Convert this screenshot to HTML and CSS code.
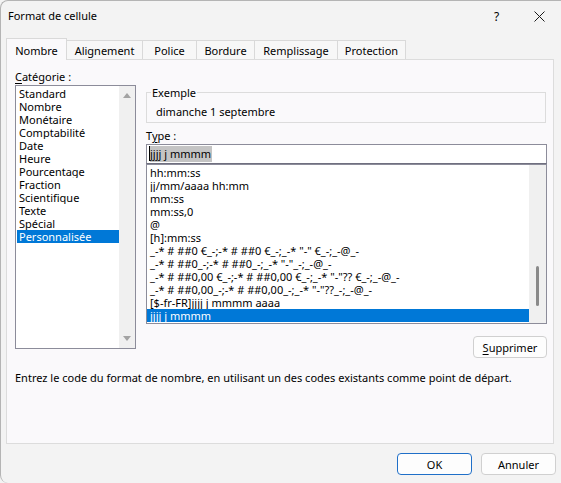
FILE: index.html
```html
<!DOCTYPE html>
<html lang="fr">
<head>
<meta charset="utf-8">
<title>Format de cellule</title>
<link rel="stylesheet" href="styles.css">
</head>
<body>
<div class="dialog">
  <div class="titlebar">
    <span class="title">Format de cellule</span>
    <div class="tb-buttons">
      <span class="tb-btn help">?</span>
      <span class="tb-btn close">
        <svg width="11" height="11" viewBox="0 0 11 11"><path d="M0.5 0.5 L10.5 10.5 M10.5 0.5 L0.5 10.5" stroke="#1a1a1a" stroke-width="1" fill="none"/></svg>
      </span>
    </div>
  </div>

  <div class="tabs">
    <div class="tab active t-nombre">Nombre</div>
    <div class="tab t-align">Alignement</div>
    <div class="tab t-police">Police</div>
    <div class="tab t-bordure">Bordure</div>
    <div class="tab t-rempl">Remplissage</div>
    <div class="tab t-prot">Protection</div>
  </div>

  <div class="panel">
    <div class="cols">
      <div class="left">
        <div class="label"><u>C</u>atégorie :</div>
        <div class="listbox cat">
          <div class="items">
            <div class="item">Standard</div>
            <div class="item">Nombre</div>
            <div class="item">Monétaire</div>
            <div class="item">Comptabilité</div>
            <div class="item">Date</div>
            <div class="item">Heure</div>
            <div class="item">Pourcentage</div>
            <div class="item">Fraction</div>
            <div class="item">Scientifique</div>
            <div class="item">Texte</div>
            <div class="item">Spécial</div>
            <div class="item selected">Personnalisée</div>
          </div>
          <div class="vscroll cat-scroll">
            <span class="arrow up"></span>
            <span class="arrow down"></span>
          </div>
        </div>
      </div>

      <div class="right">
        <div class="group">
          <div class="group-label">Exemple</div>
          <div class="group-text">dimanche 1 septembre</div>
        </div>
        <div class="label type-label">T<u>y</u>pe :</div>
        <div class="input"><span class="caret"></span><span class="sel">jjjj j mmmm</span></div>
        <div class="listbox types">
          <div class="items">
            <div class="item">hh:mm:ss</div>
            <div class="item">jj/mm/aaaa hh:mm</div>
            <div class="item">mm:ss</div>
            <div class="item">mm:ss,0</div>
            <div class="item">@</div>
            <div class="item">[h]:mm:ss</div>
            <div class="item">_-* # ##0 €_-;-* # ##0 €_-;_-* "-" €_-;_-@_-</div>
            <div class="item">_-* # ##0_-;-* # ##0_-;_-* "-"_-;_-@_-</div>
            <div class="item">_-* # ##0,00 €_-;-* # ##0,00 €_-;_-* "-"?? €_-;_-@_-</div>
            <div class="item">_-* # ##0,00_-;-* # ##0,00_-;_-* "-"??_-;_-@_-</div>
            <div class="item">[$-fr-FR]jjjj j mmmm aaaa</div>
            <div class="item selected">jjjj j mmmm</div>
          </div>
          <div class="vscroll type-scroll">
            <span class="thumb"></span>
          </div>
        </div>
        <div class="btn-row">
          <button class="btn"><u>S</u>upprimer</button>
        </div>
      </div>
    </div>
    <p class="desc">Entrez le code du format de nombre, en utilisant un des codes existants comme point de départ.</p>
  </div>

  <div class="footer">
    <button class="btn default">OK</button>
    <button class="btn">Annuler</button>
  </div>
</div>
</body>
</html>
```

FILE: styles.css
```css
* { box-sizing: border-box; }

html, body {
  margin: 0;
  padding: 0;
  background: #f3f3f3;
}

body {
  font-family: "Noto Sans", "Open Sans", sans-serif;
  font-size: 11px;
  line-height: 15px;
  color: #000;
}

.dialog {
  width: 561px;
  height: 483px;
  background: #f3f3f3;
  border-top: 1px solid #b4b4b4;
  border-left: 1px solid #b4b4b4;
  border-radius: 8px 0 0 8px;
  overflow: hidden;
  display: flex;
  flex-direction: column;
}

/* title bar */
.titlebar {
  height: 37px;
  display: flex;
  justify-content: space-between;
  align-items: flex-start;
  padding-left: 7px;
}
.title {
  padding-top: 7px;
  font-size: 11px;
}
.tb-buttons {
  display: flex;
}
.tb-btn {
  width: 46px;
  height: 30px;
  display: flex;
  align-items: center;
  justify-content: center;
}
.help {
  font-size: 12px;
  padding-top: 1px;
  width: 45px;
  margin-right: -2px;
}
.close {
  width: 44px;
  padding-top: 1px;
}

/* tabs */
.tabs {
  display: flex;
  align-items: flex-end;
  height: 21px;
  padding-left: 5px;
  position: relative;
  z-index: 2;
}
.tab {
  border: 1px solid #d9d9d9;
  border-bottom: none;
  background: #f7f7f7;
  padding: 2px 0 1px 0;
  height: 19px;
  margin-left: -1px;
  white-space: nowrap;
  text-align: center;
}
.tab.active {
  background: #faf9fb;
  height: 22px;
  padding: 4px 0 2px 0;
  margin-bottom: -1px;
  margin-left: 0;
  position: relative;
  z-index: 3;
}
.t-nombre { width: 61px; }
.t-align { width: 77px; }
.t-police { width: 55px; }
.t-bordure { width: 59px; }
.t-rempl { width: 84px; }
.t-prot { width: 69px; }

/* panel */
.panel {
  margin: 0 7px 0 5px;
  height: 385px;
  background: #faf9fb;
  border: 1px solid #dcdcdc;
  padding: 9px 0 0 8px;
  position: relative;
  z-index: 1;
}

.cols {
  display: flex;
  gap: 10px;
}

.left {
  width: 121px;
}
.label {
  height: 15px;
}
.label u, .btn u {
  text-underline-offset: 2px;
}

.listbox {
  margin-top: 1px;
  border: 1px solid #8c8c9a;
  background: #ffffff;
  display: flex;
}
.listbox .items {
  flex: 1;
  min-width: 0;
  padding-top: 1px;
}
.item {
  height: 13px;
  line-height: 13px;
  white-space: nowrap;
  overflow: hidden;
}
.item.selected {
  background: #0078d7;
  color: #ffffff;
}

.cat {
  height: 264px;
}
.cat .items {
  padding-left: 1px;
}
.cat .item {
  padding-left: 2px;
}
.vscroll {
  background: #f0f0f0;
  display: flex;
  flex-direction: column;
}
.cat-scroll {
  width: 16px;
  justify-content: space-between;
  align-items: center;
  padding: 7px 0 7px 0;
}
.arrow {
  width: 0;
  height: 0;
  border-left: 4px solid transparent;
  border-right: 4px solid transparent;
}
.arrow.up {
  border-bottom: 5px solid #a3a3a3;
}
.arrow.down {
  border-top: 5px solid #a3a3a3;
}

/* right column */
.right {
  width: 401px;
  padding-top: 23px;
}
.group {
  border: 1px solid #dcdcdc;
  padding: 0 0 3px 9px;
  width: 400px;
}
.group-label {
  width: fit-content;
  margin: -8px 0 0 -5px;
  padding: 0 1px;
  background: #faf9fb;
}
.group-text {
  margin-top: 4px;
}
.type-label {
  margin-top: 5px;
}
.input {
  margin-top: 1px;
  height: 20px;
  border: 1px solid #8c8c9a;
  border-bottom-color: #6f6f7f;
  background: #ffffff;
  padding: 1px 0 0 2px;
  display: flex;
  align-items: flex-start;
}
.caret {
  width: 1px;
  height: 15px;
  background: #000;
}
.sel {
  background: #c4c4c4;
  height: 16px;
  line-height: 15px;
  padding-right: 1px;
}

.types {
  margin-top: 0;
  height: 160px;
}
.types .item {
  padding-left: 3px;
}
.type-scroll {
  width: 17px;
  padding: 101px 0 0 7px;
}
.thumb {
  width: 3px;
  height: 40px;
  background: #8a8a8a;
  border-radius: 2px;
}

.btn-row {
  display: flex;
  justify-content: flex-end;
  margin-top: 12px;
}

.btn {
  font-family: "Noto Sans", "Open Sans", sans-serif;
  font-size: 11px;
  line-height: 15px;
  color: #000;
  height: 22px;
  background: #fdfdfd;
  border: 1px solid #d0d0d0;
  border-radius: 4px;
  padding: 0;
  width: 74px;
}
.btn.default {
  border-color: #1f6fc8;
  width: 75px;
}

.desc {
  margin: 12px 0 0 0;
  height: 15px;
  white-space: nowrap;
}

/* footer */
.footer {
  display: flex;
  justify-content: flex-end;
  gap: 9px;
  padding: 9px 5px 0 0;
}
.footer .btn {
  width: 75px;
}
```
